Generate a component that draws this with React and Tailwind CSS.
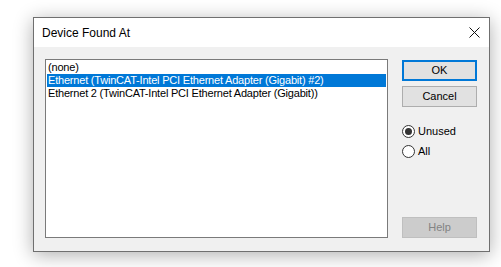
export default function App() {
  const font = { fontFamily: '"Liberation Sans", Arial, sans-serif' };
  return (
    <div className="w-[501px] h-[267px] bg-white pl-[33px] pt-[17px]" style={font}>
      <div className="w-[457px] h-[235px] border border-[#6f6f6f] bg-[#f0f0f0] flex flex-col shadow-[0_3px_18px_rgba(0,0,0,0.32)]">
        <div className="h-[29px] bg-white flex items-center justify-between pl-[8px] pr-[9px]">
          <span className="text-[12px] text-black leading-none">Device Found At</span>
          <svg width="11" height="11" viewBox="0 0 11 11" className="block">
            <path d="M0.5 0.5 L10.5 10.5 M10.5 0.5 L0.5 10.5" stroke="#111" strokeWidth="1" fill="none" />
          </svg>
        </div>
        <div className="flex-1 flex gap-[14px] pl-[11px] pr-[10px] pt-[12px] pb-[13px]">
          <div className="w-[343px] h-[179px] border border-[#7a7a7a] bg-white pt-[1px] px-[1px] text-[11px] tracking-[-0.2px] text-black">
            <div className="h-[13px] leading-[13px] pl-[1px] whitespace-nowrap">(none)</div>
            <div className="h-[13px] leading-[13px] pl-[1px] bg-[#0078d7] text-white whitespace-nowrap">Ethernet (TwinCAT-Intel PCI Ethernet Adapter (Gigabit) #2)</div>
            <div className="h-[13px] leading-[13px] pl-[1px] whitespace-nowrap">Ethernet 2 (TwinCAT-Intel PCI Ethernet Adapter (Gigabit))</div>
          </div>
          <div className="w-[75px] flex flex-col text-[11px]">
            <div className="mt-[1px] h-[21px] border-2 border-[#0078d7] bg-[#e1e1e1] flex items-center justify-center text-black">OK</div>
            <div className="mt-[5px] h-[21px] border border-[#adadad] bg-[#e1e1e1] flex items-center justify-center text-black">Cancel</div>
            <div className="mt-[18px] flex items-center gap-[3px] h-[13px]">
              <svg width="13" height="13" viewBox="0 0 13 13" className="block">
                <circle cx="6.5" cy="6.5" r="6" fill="#fff" stroke="#333" strokeWidth="1" />
                <circle cx="6.5" cy="6.5" r="3.5" fill="#333" />
              </svg>
              <span className="text-black leading-none">Unused</span>
            </div>
            <div className="mt-[7px] flex items-center gap-[3px] h-[13px]">
              <svg width="13" height="13" viewBox="0 0 13 13" className="block">
                <circle cx="6.5" cy="6.5" r="6" fill="#fff" stroke="#333" strokeWidth="1" />
              </svg>
              <span className="text-black leading-none">All</span>
            </div>
            <div className="mt-auto h-[21px] border border-[#bfbfbf] bg-[#cccccc] flex items-center justify-center text-[#838383]">Help</div>
          </div>
        </div>
      </div>
    </div>
  );
}
